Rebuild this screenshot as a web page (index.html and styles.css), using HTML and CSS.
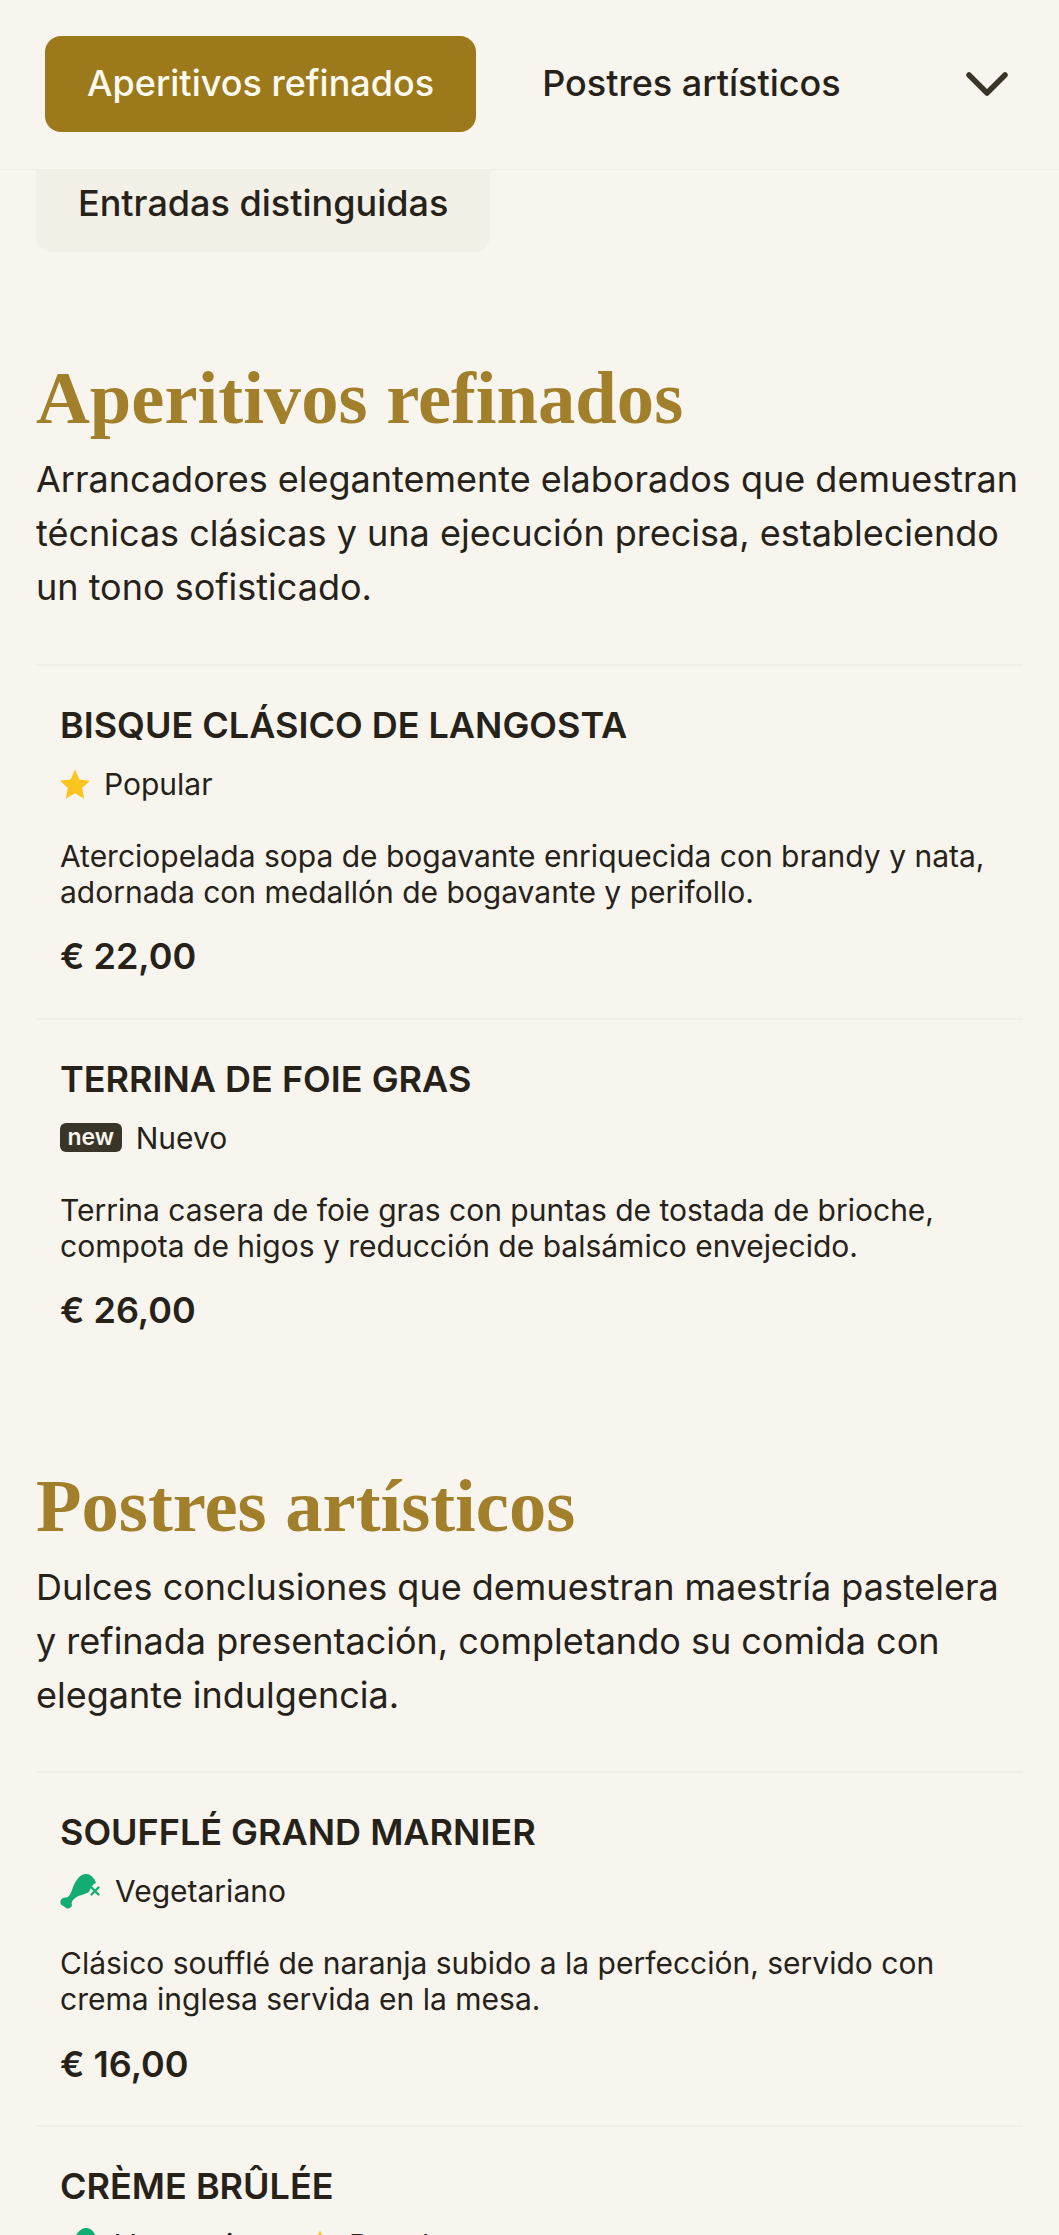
FILE: index.html
```html
<!DOCTYPE html>
<html lang="es">
<head>
<meta charset="utf-8">
<title>Menú</title>
<link rel="stylesheet" href="styles.css">
</head>
<body>
<div class="page">
  <nav class="tabs">
    <a class="tab tab-active">Aperitivos refinados</a>
    <a class="tab">Postres artísticos</a>
    <svg class="chevron" viewBox="0 0 42 24" fill="none"><path d="M3 3 21 21 39 3" stroke="#3a3529" stroke-width="5.5" stroke-linecap="round" stroke-linejoin="round"/></svg>
  </nav>
  <div class="dropdown">Entradas distinguidas</div>

  <section class="section section-first">
    <h2 class="section-title">Aperitivos refinados</h2>
    <p class="section-intro">Arrancadores elegantemente elaborados que demuestran técnicas clásicas y una ejecución precisa, estableciendo un tono sofisticado.</p>
    <article class="item">
      <h3 class="item-name">BISQUE CLÁSICO DE LANGOSTA</h3>
      <div class="tags">
        <span class="tag"><svg class="icon-star" viewBox="0 0 24 24"><path fill="#fcc41f" d="M12 .3l3.500 8 8.500 1-6.300 5.800 1.700 8.600-7.400-4.300-7.400 4.300 1.700-8.600L0 9.300l8.500-1z"/></svg>Popular</span>
      </div>
      <p class="item-desc">Aterciopelada sopa de bogavante enriquecida con brandy y nata, adornada con medallón de bogavante y perifollo.</p>
      <div class="price">€ 22,00</div>
    </article>
    <article class="item">
      <h3 class="item-name">TERRINA DE FOIE GRAS</h3>
      <div class="tags">
        <span class="tag"><span class="badge-new">new</span>Nuevo</span>
      </div>
      <p class="item-desc">Terrina casera de foie gras con puntas de tostada de brioche, compota de higos y reducción de balsámico envejecido.</p>
      <div class="price">€ 26,00</div>
    </article>
  </section>

  <section class="section">
    <h2 class="section-title">Postres artísticos</h2>
    <p class="section-intro">Dulces conclusiones que demuestran maestría pastelera y refinada presentación, completando su comida con elegante indulgencia.</p>
    <article class="item">
      <h3 class="item-name">SOUFFLÉ GRAND MARNIER</h3>
      <div class="tags">
        <span class="tag"><svg class="icon-veg" viewBox="0 0 41 36"><path fill="#12ad72" d="M25 1C30 .5 34 4 36 10c-3 1-5 4-6 7l-1 2c-5 3-11 3-15 7-2 2-3 4-2 6-.5 3-3.500 4.500-6 3-1.500-1-2-2-2.500-2C1 33 0 30 .5 28c.5-2.500 3.500-4 6-3.500C9 24 10.500 21 12 17c2-6 6-15 13-16z"/><path stroke="#12ad72" stroke-width="2.400" stroke-linecap="round" d="M31.500 14.500l7 7m0-7l-7 7" fill="none"/></svg>Vegetariano</span>
      </div>
      <p class="item-desc">Clásico soufflé de naranja subido a la perfección, servido con crema inglesa servida en la mesa.</p>
      <div class="price">€ 16,00</div>
    </article>
    <article class="item">
      <h3 class="item-name">CRÈME BRÛLÉE</h3>
      <div class="tags">
        <span class="tag"><svg class="icon-veg" viewBox="0 0 41 36"><path fill="#12ad72" d="M25 1C30 .5 34 4 36 10c-3 1-5 4-6 7l-1 2c-5 3-11 3-15 7-2 2-3 4-2 6-.5 3-3.500 4.500-6 3-1.500-1-2-2-2.500-2C1 33 0 30 .5 28c.5-2.500 3.500-4 6-3.500C9 24 10.500 21 12 17c2-6 6-15 13-16z"/><path stroke="#12ad72" stroke-width="2.400" stroke-linecap="round" d="M31.500 14.500l7 7m0-7l-7 7" fill="none"/></svg>Vegetariano</span>
        <span class="tag"><svg class="icon-star" viewBox="0 0 24 24"><path fill="#fcc41f" d="M12 .3l3.500 8 8.500 1-6.300 5.800 1.700 8.600-7.400-4.300-7.400 4.300 1.700-8.600L0 9.300l8.500-1z"/></svg>Popular</span>
      </div>
    </article>
  </section>
</div>
</body>
</html>
```
FILE: styles.css
```css
* { box-sizing: border-box; }
html, body { margin: 0; padding: 0; background: #f8f5ee; }
.page {
  height: 2235px;
  overflow: hidden;
  font-family: Inter, "Liberation Sans", sans-serif;
  color: #26221a;
}
.tabs {
  display: flex;
  align-items: center;
  height: 170px;
  padding: 0 51px 2px 45px;
  border-bottom: 1px solid #f0ede4;
}
.tab {
  display: flex;
  align-items: center;
  height: 96px;
  padding: 0 42px 2px;
  margin-right: 24px;
  font-size: 36px;
  font-weight: 500;
  white-space: nowrap;
  border-radius: 16px;
}
.tab-active { background: #9c7a1c; color: #fdfaf0; }
.chevron { width: 42px; height: 24px; margin-left: auto; }
.dropdown {
  width: 454px;
  height: 82px;
  margin-left: 36px;
  padding: 0 42px;
  line-height: 66px;
  font-size: 36px;
  font-weight: 500;
  white-space: nowrap;
  background: #f3f0e7;
  border-radius: 0 0 16px 16px;
}
.section { padding: 0 36px; margin-top: 94px; }
.section-first { margin-top: 106px; }
.section-title {
  margin: 0;
  font-family: "Liberation Serif", serif;
  font-size: 74.600px;
  line-height: 80px;
  font-weight: 700;
  color: #a17f2b;
}
.section-intro {
  margin: 14px 0 49.500px;
  font-size: 36px;
  line-height: 54px;
  color: #26221a;
}
.item {
  height: 354px;
  padding: 37px 24px 0;
  border-top: 2px solid #f1eee5;
}
.item-name {
  margin: 0;
  font-size: 36px;
  line-height: 44px;
  font-weight: 600;
}
.tags { display: flex; gap: 19px; margin-top: 15px; }
.tag {
  display: inline-flex;
  align-items: center;
  gap: 14px;
  font-size: 30px;
  line-height: 44px;
}
.icon-star { width: 30px; height: 30px; }
.icon-veg { width: 41px; height: 36px; }
.badge-new {
  display: inline-block;
  background: #3a3529;
  color: #f8f5ee;
  font-size: 23px;
  font-weight: 600;
  line-height: 29px;
  padding: 0 7.500px;
  border-radius: 6px;
}
.item-desc {
  margin: 32px 0 0;
  font-size: 30px;
  line-height: 36px;
}
.price {
  margin-top: 24.500px;
  font-size: 36px;
  line-height: 44px;
  font-weight: 600;
}
```
